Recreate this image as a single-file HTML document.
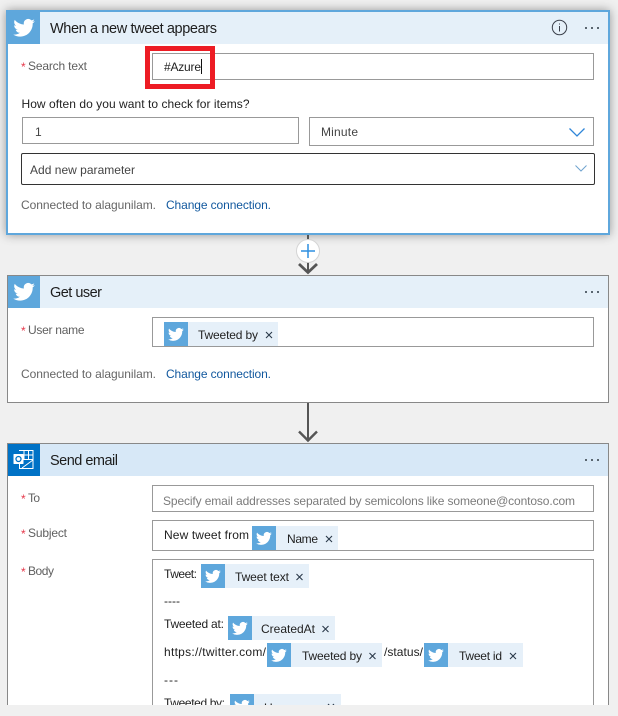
<!DOCTYPE html>
<html><head><meta charset="utf-8"><title>Flow</title>
<style>
html,body{margin:0;padding:0;background:#f0f0f0;width:618px;height:716px;overflow:hidden}
svg{display:block}
text{font-family:"Liberation Sans",sans-serif;font-size:12px;fill:#333;white-space:pre}
.t{font-size:14.5px;fill:#1d1d1d}
.l{fill:#5f5f5f}
.v{fill:#444}
.r{fill:#e6394b;font-size:12px}
.g{fill:#666}
.c{fill:#11589e}
.b{fill:#1f1f1f}
.p{fill:#7b7b7b}
.f{fill:#fff;stroke:#999;stroke-width:1}
.k{fill:#e6f0f9}
.i{fill:#5ea7dc}
.x{stroke:#2b3a4a;stroke-width:1.1;fill:none}
</style></head>
<body>
<svg xmlns="http://www.w3.org/2000/svg" width="618" height="716" viewBox="0 0 618 716">
<defs>
<filter id="s" x="-5%" y="-15%" width="110%" height="130%"><feDropShadow dx="0" dy="0" stdDeviation="5" flood-color="#000" flood-opacity=".38"/></filter>
<path id="bird" fill="#fff" d="M23.95 4.57a10 10 0 0 1-2.82.77 4.96 4.96 0 0 0 2.16-2.72c-.95.55-2 .96-3.12 1.18a4.92 4.92 0 0 0-8.38 4.48C7.69 8.1 4.07 6.13 1.64 3.16a4.82 4.82 0 0 0-.67 2.48c0 1.71.87 3.21 2.19 4.1a4.9 4.9 0 0 1-2.23-.61v.06c0 2.39 1.7 4.38 3.95 4.83-.41.11-.85.17-1.3.17-.31 0-.61-.03-.92-.08a4.93 4.93 0 0 0 4.6 3.42A9.87 9.87 0 0 1 0 19.54a13.94 13.94 0 0 0 7.55 2.21c9.05 0 14-7.5 14-13.98 0-.21 0-.42-.02-.63a9.94 9.94 0 0 0 2.46-2.57z"/>
</defs>
<rect width="618" height="716" fill="#f0f0f0"/>

<!-- card 1 -->
<rect x="7" y="11" width="602" height="223" fill="#fff" stroke="#5ea7dc" stroke-width="2" filter="url(#s)"/>
<rect x="8" y="12" width="600" height="32" fill="#e5f0f9"/>
<rect x="8" y="12" width="32" height="32" fill="#5ea7dc"/>
<use href="#bird" transform="translate(13.300 17) scale(.9)"/>
<text class="t" x="50" y="33" textLength="167">When a new tweet appears</text>
<circle cx="559.500" cy="27.500" r="7.200" fill="none" stroke="#3a3f4a" stroke-width="1"/>
<rect x="559" y="26" width="1" height="5.500" fill="#3a3f4a"/><rect x="559" y="23.500" width="1" height="1" fill="#3a3f4a"/>
<g fill="#5a6670"><rect x="585" y="27" width="2" height="2"/><rect x="591" y="27" width="2" height="2"/><rect x="597" y="27" width="2" height="2"/></g>

<text class="r" x="21" y="71">*</text><text class="l" x="28" y="70" textLength="59">Search text</text>
<rect class="f" x="152.500" y="53.500" width="441" height="26"/>
<text class="b" x="164" y="71" textLength="37">#Azure</text>
<rect x="201" y="59" width="1" height="15" fill="#111"/>
<rect x="147.500" y="48.500" width="65" height="38" fill="none" stroke="#ed1c24" stroke-width="5"/>

<text class="b" x="21.500" y="108" textLength="228">How often do you want to check for items?</text>
<rect class="f" x="22.500" y="117.500" width="276" height="26"/>
<text class="v" x="35" y="136">1</text>
<rect class="f" x="309.500" y="117.500" width="284" height="28"/>
<text class="v" x="321" y="136" textLength="37">Minute</text>
<path d="M569.500 128.500 577 136 584.500 128.500" fill="none" stroke="#2f86d8" stroke-width="1.300"/>
<rect x="21.500" y="153.500" width="573" height="31" rx="1.500" fill="#fff" stroke="#333" stroke-width="1"/>
<text class="v" x="30" y="174" textLength="105">Add new parameter</text>
<path d="M575.500 165.500 581 171 586.500 165.500" fill="none" stroke="#6fa3cf" stroke-width="1"/>
<text class="g" x="21" y="209" textLength="135">Connected to alagunilam.</text>
<text class="c" x="166" y="209" textLength="105">Change connection.</text>

<!-- connectors -->
<rect x="307" y="235" width="2" height="37" fill="#555"/>
<path d="M299 264 308 272.500 317 264" fill="none" stroke="#555" stroke-width="2.800"/>
<rect x="307" y="403" width="2" height="36" fill="#555"/>
<path d="M299 431.500 308 440.500 317 431.500" fill="none" stroke="#555" stroke-width="2.400"/>

<!-- plus -->
<circle cx="308" cy="251" r="11.500" fill="#fff" stroke="#d5d5d5" stroke-width="1"/>
<path d="M301 251H315M308 244V258" stroke="#2f8fe0" stroke-width="1.500" fill="none"/>

<!-- card 2 -->
<rect x="7.500" y="275.500" width="601" height="127" fill="#fff" stroke="#888" stroke-width="1"/>
<rect x="8" y="276" width="600" height="32" fill="#e5f0f9"/>
<rect x="8" y="276" width="32" height="32" fill="#5ea7dc"/>
<use href="#bird" transform="translate(13.300 281) scale(.9)"/>
<text class="t" x="50" y="297" textLength="52">Get user</text>
<g fill="#5a6670"><rect x="585" y="291" width="2" height="2"/><rect x="591" y="291" width="2" height="2"/><rect x="597" y="291" width="2" height="2"/></g>
<text class="r" x="21" y="335">*</text><text class="l" x="28" y="334" textLength="56.500">User name</text>
<rect class="f" x="152.500" y="317.500" width="441" height="29"/>
<rect class="k" x="164" y="322" width="114" height="24"/>
<rect class="i" x="164" y="322" width="24" height="24"/>
<use href="#bird" transform="translate(168 326.500) scale(.66)"/>
<text class="b" x="198" y="339" textLength="60">Tweeted by</text>
<path class="x" d="M266 332 272 338M272 332 266 338"/>
<text class="g" x="21" y="378" textLength="135">Connected to alagunilam.</text>
<text class="c" x="166" y="378" textLength="105">Change connection.</text>

<!-- card 3 -->
<rect x="7.500" y="443.500" width="601" height="280" fill="#fff" stroke="#888" stroke-width="1"/>
<rect x="8" y="444" width="600" height="32" fill="#d7e8f7"/>
<rect x="8" y="444" width="32" height="32" fill="#0072c6"/>
<g fill="none" stroke="#fff" stroke-width="1">
<path d="M19.500 451V450.500H33V468.500H19.500V464"/>
<path d="M24 450.500V460M28.500 450.500V459M19.500 455H33M19.500 459.500H33M22 468 33 460"/>
</g>
<rect x="13.500" y="454" width="10" height="10" rx=".5" fill="#fff"/>
<circle cx="18.500" cy="459" r="2.500" fill="none" stroke="#0072c6" stroke-width="1.300"/>
<text class="t" x="50" y="465" textLength="68">Send email</text>
<g fill="#5a6670"><rect x="585" y="459" width="2" height="2"/><rect x="591" y="459" width="2" height="2"/><rect x="597" y="459" width="2" height="2"/></g>

<text class="r" x="21" y="503">*</text><text class="l" x="28" y="502" textLength="12">To</text>
<rect class="f" x="152.500" y="485.500" width="441" height="26"/>
<text class="p" x="163" y="505" textLength="412">Specify email addresses separated by semicolons like someone@contoso.com</text>

<text class="r" x="21" y="538">*</text><text class="l" x="28" y="537" textLength="39">Subject</text>
<rect class="f" x="152.500" y="520.500" width="441" height="30"/>
<text class="b" x="164" y="539" textLength="85">New tweet from</text>
<rect class="k" x="252" y="526" width="86" height="24"/>
<rect class="i" x="252" y="526" width="24" height="24"/>
<use href="#bird" transform="translate(256 530.500) scale(.66)"/>
<text class="b" x="287" y="543" textLength="31">Name</text>
<path class="x" d="M326 536 332 542M332 536 326 542"/>

<text class="r" x="21" y="576">*</text><text class="l" x="28" y="575" textLength="26">Body</text>
<rect class="f" x="152.500" y="559.500" width="441" height="170"/>
<text class="b" x="164" y="578" textLength="33">Tweet:</text>
<rect class="k" x="201" y="564" width="108" height="24"/>
<rect class="i" x="201" y="564" width="24" height="24"/>
<use href="#bird" transform="translate(205 568.500) scale(.66)"/>
<text class="b" x="235" y="581" textLength="54">Tweet text</text>
<path class="x" d="M296.500 574 302.500 580M302.500 574 296.500 580"/>
<text class="b" x="164" y="605" textLength="16">----</text>
<text class="b" x="164" y="628" textLength="60">Tweeted at:</text>
<rect class="k" x="228" y="616" width="107" height="24"/>
<rect class="i" x="228" y="616" width="24" height="24"/>
<use href="#bird" transform="translate(232 620.500) scale(.66)"/>
<text class="b" x="261" y="633" textLength="54">CreatedAt</text>
<path class="x" d="M322.500 626 328.500 632M328.500 626 322.500 632"/>
<text class="b" x="164" y="656" textLength="102">https://twitter.com/</text>
<rect class="k" x="267" y="643" width="115" height="24"/>
<rect class="i" x="267" y="643" width="24" height="24"/>
<use href="#bird" transform="translate(271 647.500) scale(.66)"/>
<text class="b" x="302" y="660" textLength="60">Tweeted by</text>
<path class="x" d="M369.500 653 375.500 659M375.500 653 369.500 659"/>
<text class="b" x="384" y="656" textLength="39">/status/</text>
<rect class="k" x="424" y="643" width="99" height="24"/>
<rect class="i" x="424" y="643" width="24" height="24"/>
<use href="#bird" transform="translate(428 647.500) scale(.66)"/>
<text class="b" x="459" y="660" textLength="43">Tweet id</text>
<path class="x" d="M510 653 516 659M516 653 510 659"/>
<text class="b" x="164" y="684" textLength="14">---</text>
<text class="b" x="164" y="707" textLength="61">Tweeted by:</text>
<rect class="k" x="230" y="694" width="111" height="24"/>
<rect class="i" x="230" y="694" width="24" height="24"/>
<use href="#bird" transform="translate(234 698.500) scale(.66)"/>
<text class="b" x="264" y="712" textLength="57">Username</text>
<path class="x" d="M328 704 334 710M334 704 328 710"/>

<!-- page fold -->
<rect x="0" y="705" width="618" height="11" fill="#f0f0f0"/>
</svg>
</body></html>
